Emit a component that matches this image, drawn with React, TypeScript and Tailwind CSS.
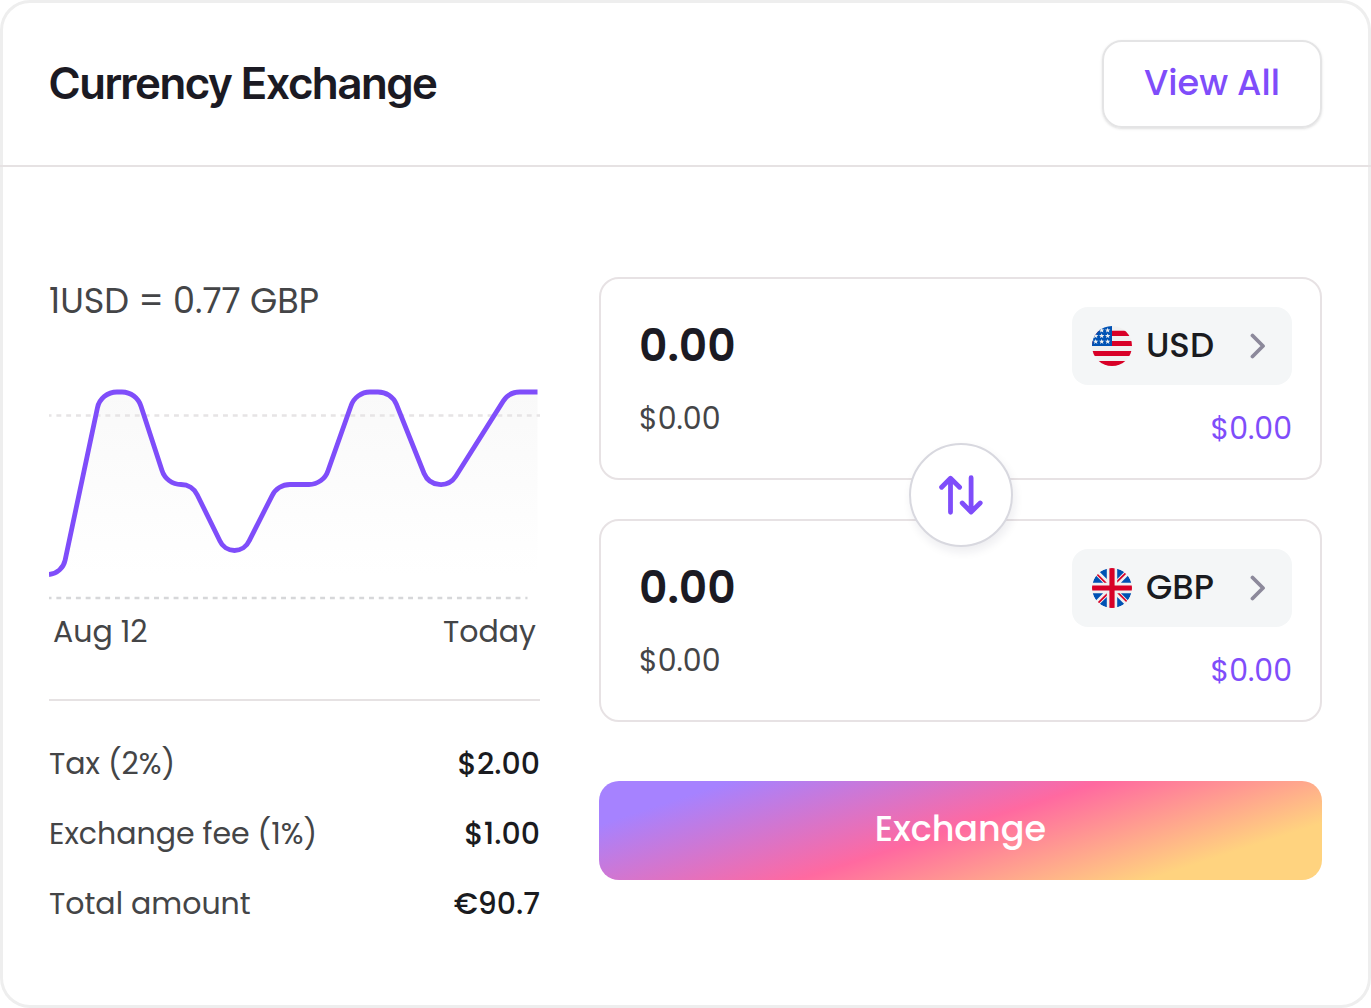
import { useState } from 'react';
import type { ReactNode } from 'react';

const fees = [
  { label: 'Tax (2%)', value: '$2.00' },
  { label: 'Exchange fee (1%)', value: '$1.00' },
  { label: 'Total amount', value: '€90.7' },
];

const linePath =
  'M0 189.5A18 18 0 0 0 16.1 175.2L48.4 22.9A20 20 0 0 1 68 7H73A20 20 0 0 1 92 21.2L113 85.5A20 20 0 0 0 132 99.5A18 18 0 0 1 148.3 109.9L170.8 155.8A16 16 0 0 0 200.2 155.8L223 110.8A20 20 0 0 1 241 99.5H260A20 20 0 0 0 279 85.7L302 20.8A20 20 0 0 1 321 7H329A20 20 0 0 1 347.4 19.2L375.1 88.5A18 18 0 0 0 406.8 91.3L454.2 16.1A20 20 0 0 1 471 7H488.5';

const stars = [
  [9.7, 4.3],
  [15.7, 4.3],
  [3.7, 10],
  [9.7, 10],
  [15.7, 10],
  [3.7, 15.7],
  [9.7, 15.7],
  [15.7, 15.7],
];

function UsFlag() {
  return (
    <svg viewBox="0 0 40 40" className="size-10" aria-hidden="true">
      <clipPath id="us-clip">
        <circle cx="20" cy="20" r="20" />
      </clipPath>
      <g clipPath="url(#us-clip)">
        <path fill="#f0f0f0" d="M0 0h40v40H0z" />
        <path
          fill="#d80027"
          d="M0 4.8h40v5.2H0zM0 15h40v5H0zM0 25h40v5H0zM0 35h40v5H0z"
        />
        <path fill="#0052b4" d="M0 0h20v20H0z" />
        {stars.map(([x, y]) => (
          <path
            key={`${x}-${y}`}
            fill="#f0f0f0"
            transform={`translate(${x} ${y})`}
            d="M0-2.8.7-.9H2.7L1.1.4 1.7 2.3 0 1.1-1.7 2.3-1.1.4-2.7-.9H-.7z"
          />
        ))}
      </g>
    </svg>
  );
}

function GbFlag() {
  return (
    <svg viewBox="0 0 40 40" className="size-10" aria-hidden="true">
      <clipPath id="gb-clip">
        <circle cx="20" cy="20" r="20" />
      </clipPath>
      <g clipPath="url(#gb-clip)">
        <path fill="#f0f0f0" d="M0 0h40v40H0z" />
        <path
          fill="#0052b4"
          d="M4.1 7.8A20 20 0 0 0 .7 14.8H11.1zM39.3 14.8A20 20 0 0 0 35.9 7.8L28.9 14.8zM.7 25.2A20 20 0 0 0 4.1 32.2L11.1 25.2zM32.2 4.1A20 20 0 0 0 25.2.7V11.1zM7.8 35.9A20 20 0 0 0 14.8 39.3V28.9zM14.8.7A20 20 0 0 0 7.8 4.1L14.8 11.1zM25.2 39.3A20 20 0 0 0 32.2 35.9L25.2 28.9zM28.9 25.2 35.9 32.2A20 20 0 0 0 39.3 25.2z"
        />
        <path
          fill="#d80027"
          d="M0 17.4h17.4V0h5.2v17.4H40v5.2H22.6V40h-5.2V22.6H0z"
        />
        <path
          fill="#d80027"
          d="M25.2 25.2 34.1 34.1 35.3 32.9 27.7 25.2zM14.8 25.2 5.9 34.1 7.1 35.3 14.8 27.7zM14.8 14.8 5.9 5.9 4.7 7.1 12.3 14.8zM25.2 14.8 34.1 5.9 32.9 4.7 25.2 12.3z"
        />
      </g>
    </svg>
  );
}

function RateChart() {
  return (
    <svg
      viewBox="0 0 491 215"
      className="mt-[60px] h-auto w-full"
      role="img"
      aria-label="USD to GBP rate"
    >
      <defs>
        <linearGradient id="area" x1="0" y1="0" x2="0" y2="1">
          <stop offset="0" stopColor="#f9f9f9" />
          <stop offset="1" stopColor="#ffffff" />
        </linearGradient>
      </defs>
      <path d={`${linePath}V190H0Z`} fill="url(#area)" />
      <path
        d="M0 30.5H491"
        stroke="#e6e4e5"
        strokeWidth="2.4"
        strokeDasharray="4.9 4.9"
        strokeDashoffset="2.4"
      />
      <path
        d="M0 213H478.5"
        stroke="#d6d7d9"
        strokeWidth="2.4"
        strokeDasharray="4.9 4.87"
        strokeDashoffset="2.4"
      />
      <path d={linePath} fill="none" stroke="#7f4dfa" strokeWidth="4.8" />
    </svg>
  );
}

interface CurrencyBoxProps {
  code: string;
  flag: ReactNode;
  value: string;
  onChange: (value: string) => void;
}

function CurrencyBox({ code, flag, value, onChange }: CurrencyBoxProps) {
  return (
    <div className="flex justify-between rounded-[20px] border-2 border-[#e7e2e4] pt-7 pr-7 pb-[29px] pl-[38px]">
      <div className="min-w-0 flex-1">
        <input
          type="text"
          inputMode="decimal"
          aria-label={`${code} amount`}
          value={value}
          onChange={(event) => onChange(event.target.value)}
          className="block h-[76px] w-full bg-transparent text-[44px] font-semibold text-[#1b1a23] outline-none"
        />
        <p className="mt-4 text-[30px] leading-10 text-[#444547]">$0.00</p>
      </div>
      <div className="flex flex-col items-end">
        <button
          type="button"
          className="flex h-[78px] items-center rounded-2xl bg-[#f4f6f7] pr-[26px] pl-5 text-[34px] font-medium text-[#1a1b20]"
        >
          {flag}
          <span className="mr-9 ml-[14px] pb-0.5">{code}</span>
          <svg viewBox="0 0 16 26" className="h-[26px] w-4" fill="none" aria-hidden="true">
            <path
              d="M2.5 2.5 13 13 2.5 23.5"
              stroke="#8c899b"
              strokeWidth="3.8"
              strokeLinecap="round"
              strokeLinejoin="round"
            />
          </svg>
        </button>
        <p className="mt-6 text-[30px] leading-10 text-[#7f4dfa]">$0.00</p>
      </div>
    </div>
  );
}

export default function App() {
  const [from, setFrom] = useState('0.00');
  const [to, setTo] = useState('0.00');

  const handleSwap = () => {
    setFrom(to);
    setTo(from);
  };

  return (
    <main className="min-h-screen rounded-[30px] bg-white font-['Poppins','Inter',sans-serif] ring-3 ring-[#eeeeee] ring-inset">
      <header className="flex items-center justify-between border-b-2 border-[#e6e2e3] px-[49px] pt-10 pb-[37px]">
        <h1 className="pb-0.5 font-['Inter_Tight','Inter_Display','Inter',sans-serif] text-[44px] leading-[56px] font-semibold text-[#1b1a23]">
          Currency Exchange
        </h1>
        <button
          type="button"
          className="h-[88px] rounded-[20px] border-2 border-[#e4e4e5] px-10 pb-0.5 text-[35px] font-medium text-[#7f4dfa] shadow-sm"
        >
          View All
        </button>
      </header>

      <div className="grid grid-cols-[491fr_723fr] gap-[59px] px-[49px] pt-[110px] pb-20">
        <section>
          <p className="text-[35px] leading-[48px] text-[#444547]">
            1USD = 0.77 GBP
          </p>
          <RateChart />
          <div className="mt-3 flex justify-between px-1 text-[30px] leading-10 text-[#444547]">
            <span>Aug 12</span>
            <span>Today</span>
          </div>
          <dl className="mt-[47px] flex flex-col gap-[30px] border-t-2 border-[#e6e2e3] pt-[43px] text-[30px] leading-10">
            {fees.map((fee) => (
              <div key={fee.label} className="flex justify-between">
                <dt className="text-[#444547]">{fee.label}</dt>
                <dd className="font-medium text-[#1a1b20]">{fee.value}</dd>
              </div>
            ))}
          </dl>
        </section>

        <section>
          <div className="relative flex flex-col gap-[39px]">
            <CurrencyBox code="USD" flag={<UsFlag />} value={from} onChange={setFrom} />
            <CurrencyBox code="GBP" flag={<GbFlag />} value={to} onChange={setTo} />
            <button
              type="button"
              aria-label="Swap currencies"
              onClick={handleSwap}
              className="absolute top-[166px] left-1/2 flex size-[104px] -translate-x-1/2 items-center justify-center rounded-full border-2 border-[#d8d8df] bg-white shadow-[2px_5px_10px_rgba(30,30,60,0.08)]"
            >
              <svg viewBox="0 0 44 44" className="size-11" fill="none" aria-hidden="true">
                <path
                  d="M11.5 39.3V5.3M2.6 14.3 11.5 5.3 20.6 14.3M32.1 4.7V39M23.2 30 32.1 39 41.2 30"
                  stroke="#7f4dfa"
                  strokeWidth="4.8"
                  strokeLinecap="round"
                  strokeLinejoin="round"
                />
              </svg>
            </button>
          </div>
          <button
            type="button"
            className="mt-[59px] h-[99px] w-full rounded-[20px] bg-[linear-gradient(162deg,#a682ff_13%,#ff69a0_49%,#ffd37f_83%)] pb-0.5 text-[35px] font-medium text-white"
          >
            Exchange
          </button>
        </section>
      </div>
    </main>
  );
}
